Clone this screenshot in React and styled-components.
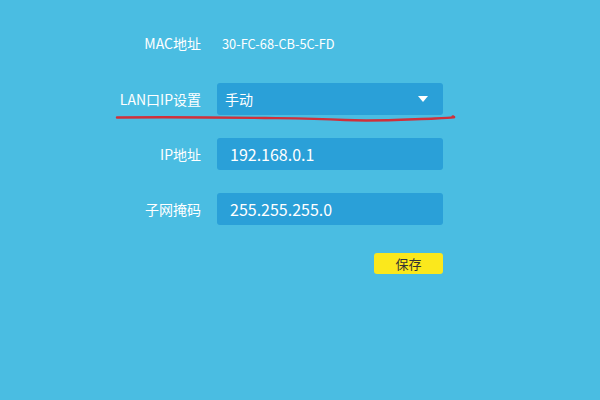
import React from "react";
import styled, { createGlobalStyle } from "styled-components";

const Global = createGlobalStyle`
  html, body { margin: 0; padding: 0; }
  body { background: #4abde2; font-family: "Noto Sans CJK SC", "Noto Sans", sans-serif; }
`;

const Page = styled.div`
  position: relative;
  width: 600px;
  height: 400px;
  background: #4abde2;
  box-sizing: border-box;
  padding-top: 27px;
  color: #fff;
`;

const Form = styled.div`
  display: flex;
  flex-direction: column;
  gap: 23px;
  width: 352px;
  margin-left: 91px;
`;

const Row = styled.div`
  position: relative;
  display: flex;
  align-items: center;
  height: 32px;
  gap: 16px;
  margin-bottom: ${(p) => (p.$extra ? p.$extra : 0)}px;
`;

const Label = styled.div`
  width: 110px;
  flex: none;
  text-align: right;
  font-size: 14px;
  line-height: 32px;
  color: #fff;
  white-space: nowrap;
`;

const Static = styled.div`
  font-size: 12.8px;
  padding-left: 5px;
`;

const Field = styled.div`
  flex: 1;
  height: 32px;
  border-radius: 3px;
  background: #2aa0d8;
  display: flex;
  align-items: center;
  justify-content: space-between;
  box-sizing: border-box;
  padding: 0 15px 0 ${(p) => (p.$select ? 8 : 13)}px;
  font-size: ${(p) => (p.$select ? 14 : 16)}px;
  color: #fff;
`;

const Caret = styled.span`
  width: 0;
  height: 0;
  border-left: 5px solid transparent;
  border-right: 5px solid transparent;
  border-top: 6px solid #fff;
`;

const ButtonRow = styled.div`
  display: flex;
  justify-content: flex-end;
  margin-top: 5px;
`;

const SaveButton = styled.button`
  width: 69px;
  height: 21px;
  border: none;
  border-radius: 3px;
  background: #fbe81c;
  color: #333;
  font-family: "Noto Sans CJK SC", sans-serif;
  font-size: 13px;
  line-height: 21px;
  padding: 0;
`;

const Underline = styled.svg`
  position: absolute;
  left: 24px;
  top: 30px;
  overflow: visible;
`;

export default function App() {
  return (
    <>
      <Global />
      <Page>
        <Form>
          <Row $extra={1}>
            <Label>MAC地址</Label>
            <Static>30-FC-68-CB-5C-FD</Static>
          </Row>
          <Row>
            <Label>LAN口IP设置</Label>
            <Field $select>
              <span>手动</span>
              <Caret />
            </Field>
            <Underline width="340" height="8">
              <path
                d="M2 4.5 C 60 4, 110 4.5, 150 5 S 200 5.5, 230 7 S 290 6.5, 320 5.5 S 335 3.5, 338 3.5"
                fill="none"
                stroke="#d0303a"
                strokeWidth="2.4"
                strokeLinecap="round"
              />
            </Underline>
          </Row>
          <Row>
            <Label>IP地址</Label>
            <Field>192.168.0.1</Field>
          </Row>
          <Row>
            <Label>子网掩码</Label>
            <Field>255.255.255.0</Field>
          </Row>
          <ButtonRow>
            <SaveButton>保存</SaveButton>
          </ButtonRow>
        </Form>
      </Page>
    </>
  );
}
